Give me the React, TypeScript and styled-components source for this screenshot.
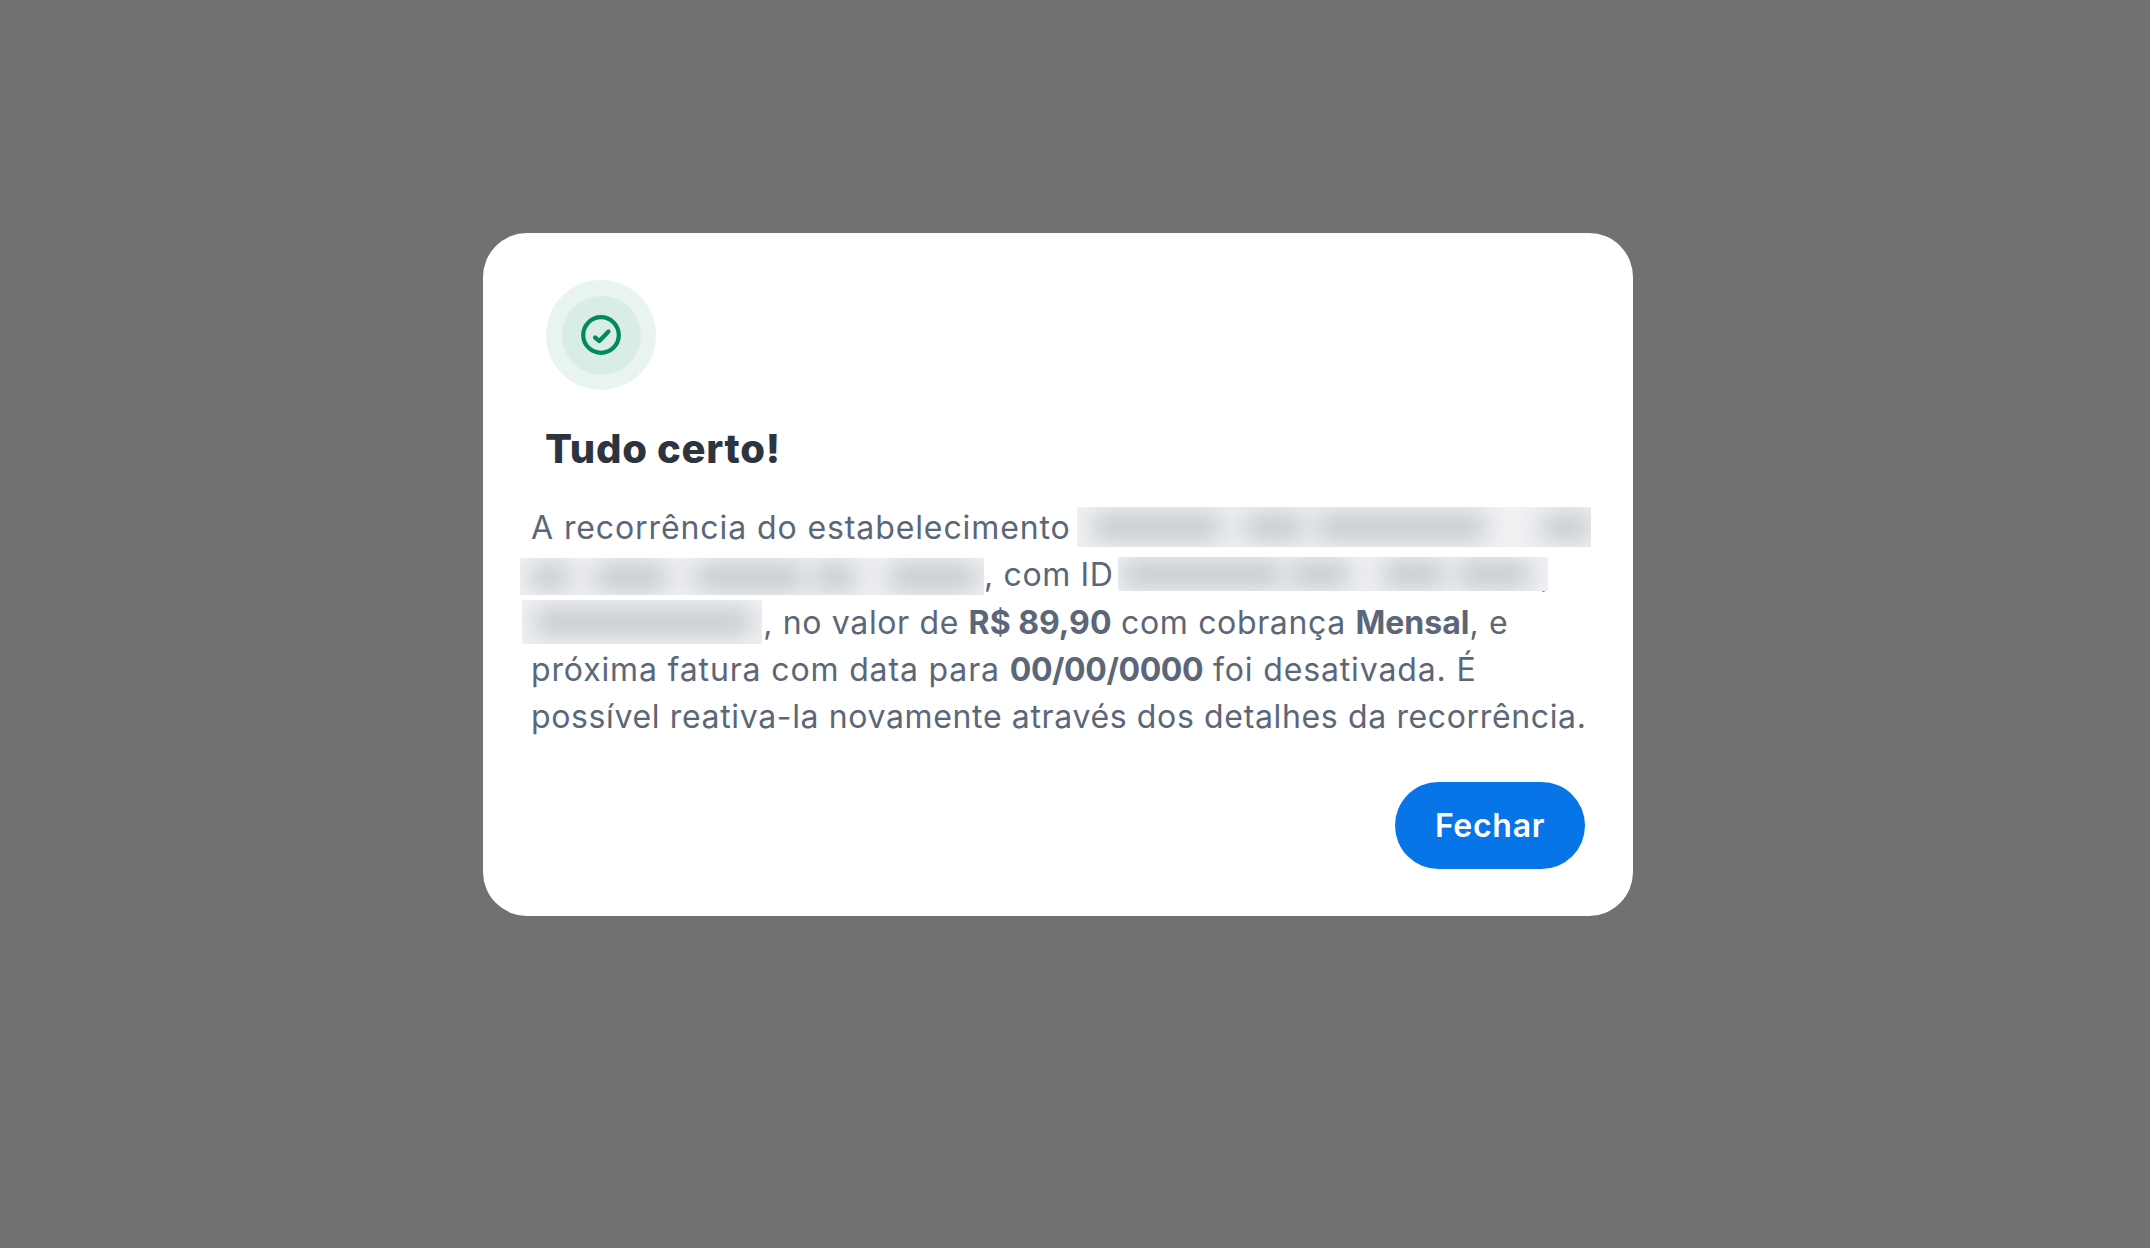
import React from 'react'
import styled, { createGlobalStyle } from 'styled-components'

const GlobalStyle = createGlobalStyle`
  html, body {
    margin: 0;
    padding: 0;
    background: #727071;
  }
`

const Page = styled.div`
  box-sizing: border-box;
  min-height: 100vh;
  padding: 233px 0 0 483px;
  font-family: Inter, 'Liberation Sans', sans-serif;
`

const Modal = styled.div`
  box-sizing: border-box;
  width: 1150px;
  height: 683px;
  padding: 47px 48px;
  display: flex;
  flex-direction: column;
  background: #fff;
  border-radius: 44px;
`

const IconHalo = styled.div`
  width: 110px;
  height: 110px;
  margin-left: 15px;
  display: flex;
  align-items: center;
  justify-content: center;
  border-radius: 50%;
  background: #e9f4f0;
`

const IconCore = styled.div`
  width: 79px;
  height: 79px;
  display: flex;
  align-items: center;
  justify-content: center;
  border-radius: 50%;
  background: #d9ede6;
`

const Title = styled.h2`
  margin: 34px 0 0 14px;
  font-size: 40px;
  line-height: 50px;
  font-weight: 800;
  letter-spacing: 0.7px;
  color: #2d343f;
`

const Body = styled.div`
  margin-top: 30px;
  font-size: 32px;
  line-height: 47.3px;
  color: #5b6779;
`

const Line = styled.div<{ $ls?: number }>`
  height: 47.3px;
  white-space: nowrap;
  letter-spacing: ${p => p.$ls ?? 0.64}px;
`

const Strong = styled.strong<{ $ls?: number }>`
  font-weight: 700;
  letter-spacing: ${p => p.$ls ?? 0}px;
`

// blurred-out text, sits on top of whatever it covers
const Patch = styled.span<{ $w: number; $h: number; $ml?: number; $mr?: number; $dy?: number }>`
  position: relative;
  top: ${p => p.$dy ?? 0}px;
  display: inline-flex;
  align-items: center;
  width: ${p => p.$w}px;
  height: ${p => p.$h}px;
  margin-left: ${p => p.$ml ?? 0}px;
  margin-right: ${p => p.$mr ?? 0}px;
  vertical-align: middle;
  overflow: hidden;
  background: #f0f1f3;
`

const Blob = styled.span<{ $w: number; $x: number }>`
  flex: none;
  width: ${p => p.$w}px;
  height: 26px;
  margin-left: ${p => p.$x}px;
  border-radius: 8px;
  background: #c2c7cd;
  filter: blur(12px);
`

const Footer = styled.div`
  margin-top: auto;
  display: flex;
  justify-content: flex-end;
`

const CloseButton = styled.button`
  width: 190px;
  height: 87px;
  border: 0;
  border-radius: 44px;
  background: #0775e8;
  color: #fff;
  font-family: inherit;
  font-size: 32px;
  font-weight: 600;
  letter-spacing: 0.7px;
`

function CheckIcon() {
  return (
    <svg width="40" height="40" viewBox="0 0 40 40" fill="none">
      <circle cx="20" cy="20" r="17.8" stroke="#008a5e" strokeWidth="4.2" />
      <path
        d="M14 22.5L18.3 26L27.5 16.5"
        stroke="#008a5e"
        strokeWidth="4.2"
        strokeLinecap="round"
        strokeLinejoin="round"
      />
    </svg>
  )
}

export default function App() {
  return (
    <Page>
      <GlobalStyle />
      <Modal>
        <IconHalo>
          <IconCore>
            <CheckIcon />
          </IconCore>
        </IconHalo>
        <Title>Tudo certo!</Title>
        <Body>
          <Line $ls={0.9}>
            A recorrência do estabelecimento{' '}
            <Patch $w={514} $h={40} $ml={-4} $dy={-3}>
              <Blob $w={130} $x={15} />
              <Blob $w={60} $x={22} />
              <Blob $w={170} $x={12} />
              <Blob $w={50} $x={55} />
            </Patch>
          </Line>
          <Line>
            <Patch $w={464} $h={37} $ml={-11} $dy={-1}>
              <Blob $w={40} $x={10} />
              <Blob $w={74} $x={24} />
              <Blob $w={110} $x={26} />
              <Blob $w={44} $x={9} />
              <Blob $w={90} $x={31} />
            </Patch>
            , com ID{' '}
            <Patch $w={430} $h={34} $ml={-5} $mr={-8} $dy={-4}>
              <Blob $w={160} $x={4} />
              <Blob $w={60} $x={8} />
              <Blob $w={62} $x={32} />
              <Blob $w={74} $x={13} />
            </Patch>
            ,
          </Line>
          <Line>
            <Patch $w={240} $h={44} $ml={-9} $mr={-18} $dy={-3}>
              <Blob $w={218} $x={12} />
            </Patch>
            e, no valor de <Strong>R$ 89,90</Strong> com cobrança <Strong>Mensal</Strong>, e
          </Line>
          <Line $ls={0.85}>
            próxima fatura com data para <Strong $ls={-0.4}>00/00/0000</Strong> foi desativada. É
          </Line>
          <Line>possível reativa-la novamente através dos detalhes da recorrência.</Line>
        </Body>
        <Footer>
          <CloseButton>Fechar</CloseButton>
        </Footer>
      </Modal>
    </Page>
  )
}
